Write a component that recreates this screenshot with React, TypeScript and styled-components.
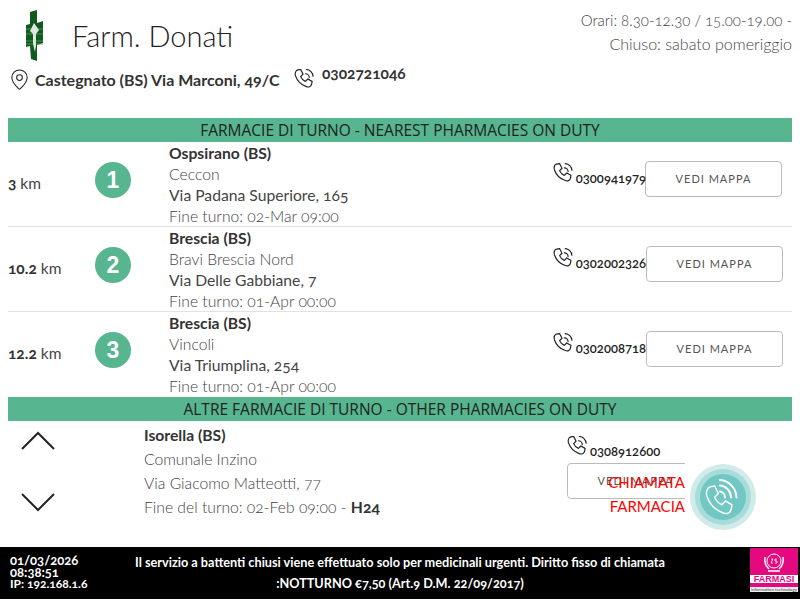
import React from 'react';
import styled, { createGlobalStyle } from 'styled-components';
import { MapPin } from 'lucide-react';

const GlobalStyle = createGlobalStyle`
  html, body {
    margin: 0;
    padding: 0;
    background: #fff;
    font-family: 'Lato', 'Open Sans', sans-serif;
    font-variant-numeric: oldstyle-nums;
    color: #333;
  }
`;

interface IPharmacy {
  city: string;
  name: string;
  address: string;
  until: string;
  km: string;
  phone: string;
  shift?: boolean;
}

const PHARMACIES: IPharmacy[] = [
  { city: 'Ospsirano (BS)', name: 'Ceccon', address: 'Via Padana Superiore, 165', until: 'Fine turno: 02-Mar 09:00', km: '3', phone: '0300941979', shift: true },
  { city: 'Brescia (BS)', name: 'Bravi Brescia Nord', address: 'Via Delle Gabbiane, 7', until: 'Fine turno: 01-Apr 00:00', km: '10.2', phone: '0302002326' },
  { city: 'Brescia (BS)', name: 'Vincoli', address: 'Via Triumplina, 254', until: 'Fine turno: 01-Apr 00:00', km: '12.2', phone: '0302008718' },
];

const HANDSET = 'M6 3 L9 2.5 L11.5 7.5 L9 10 C10 12.5 11.5 14 14 15 L16.5 12.5 L21 15 L20.5 18 C20 20.5 17.5 21.5 15 20.5 C9 18.5 5.5 15 3.5 9 C2.8 6 4 3.5 6 3 Z';

const PhoneIcon: React.FC = () => (
  <svg width="20" height="20" viewBox="2 2 21 21" fill="none" stroke="#222" strokeWidth="1.25" strokeLinecap="round">
    <path d={HANDSET} />
    <path d="M14 7 a4 4 0 0 1 4 4" />
    <path d="M15 2.5 a7.5 7.5 0 0 1 7 7" />
  </svg>
);

const CallIcon: React.FC = () => (
  <svg width="36" height="36" viewBox="0 0 36 36" fill="none" stroke="#fff" strokeLinecap="round">
    <g transform="translate(-3.3,3.25) scale(1.44,1.5)" strokeWidth="1">
      <path d={HANDSET} />
    </g>
    <g strokeWidth="2">
      <path d="M15 12.5 a6 6 0 0 1 5 6" />
      <path d="M15 6.5 a12 12 0 0 1 11 12" />
      <path d="M15 1 a18 18 0 0 1 16.5 17.5" />
    </g>
  </svg>
);

const CrossLogo: React.FC = () => (
  <svg width="17" height="51" viewBox="0 0 17 51">
    <path d="M4 2 L11 0 L11 13 L17 11 L17 33 L11 35 L11 51 L5 49 L4 36 L0 37 L0 15 L4 14 Z" fill="#0f5a1c" />
    <path d="M0 19 H17 M0 24 H17 M0 31 H17 M0 34 H17" stroke="#5a9a62" strokeWidth="0.8" />
    <path d="M8 13 L13 20 L10 24 L10 36 L9 42 L7 34 L7 24 L4 21 Z" fill="#dfe6df" />
  </svg>
);

const Farmasi: React.FC = () => (
  <FarmasiBox>
    <svg width="24" height="27" viewBox="0 0 24 27" fill="none" stroke="#fff">
      <circle cx="12" cy="13" r="7" strokeWidth="1" />
      <path d="M3 9 Q2 17 7 21 M21 9 Q22 17 17 21 M6 23 H18" strokeWidth="1.5" />
      <path d="M9 11 H11 L9 15 H11 M15 11 H13 V13 H15 V15 H13" strokeWidth="0.8" />
    </svg>
    <FarmasiName>FARMASI</FarmasiName>
    <FarmasiGap />
    <FarmasiTag>information technology</FarmasiTag>
  </FarmasiBox>
);

const App: React.FC = () => (
  <Page>
    <GlobalStyle />
    <Header>
      <HeaderLeft>
        <Brand>
          <CrossLogo />
          <Title>Farm. Donati</Title>
        </Brand>
        <ContactRow>
          <Pin>
            <MapPin size={23} strokeWidth={1.1} color="#222" />
          </Pin>
          <Address>Castegnato (BS) Via Marconi, 49/C</Address>
          <PhoneIcon />
          <HeaderPhone>0302721046</HeaderPhone>
        </ContactRow>
      </HeaderLeft>
      <Hours>
        <div>Orari: 8.30-12.30 / 15.00-19.00 -</div>
        <Closed>Chiuso: sabato pomeriggio</Closed>
      </Hours>
    </Header>

    <SectionBar>FARMACIE DI TURNO - NEAREST PHARMACIES ON DUTY</SectionBar>
    {PHARMACIES.map((p, i) => (
      <Row key={p.phone} last={i === PHARMACIES.length - 1}>
        <Km>
          <b>{p.km}</b> km
        </Km>
        <BadgeCell>
          <Badge>{i + 1}</Badge>
        </BadgeCell>
        <Info>
          <City>{p.city}</City>
          <Muted>{p.name}</Muted>
          <Street>{p.address}</Street>
          <Muted>{p.until}</Muted>
        </Info>
        <PhoneCell>
          <PhoneIcon />
          <PhoneNumber>{p.phone}</PhoneNumber>
        </PhoneCell>
        <MapButton shift={p.shift}>VEDI MAPPA</MapButton>
      </Row>
    ))}

    <SectionBar>ALTRE FARMACIE DI TURNO - OTHER PHARMACIES ON DUTY</SectionBar>
    <Other>
      <Arrows>
        <svg width="34" height="20" viewBox="0 0 34 20" fill="none" stroke="#222" strokeWidth="2">
          <polyline points="1,18 17,2 33,18" />
        </svg>
        <svg width="34" height="20" viewBox="0 0 34 20" fill="none" stroke="#222" strokeWidth="2">
          <polyline points="1,2 17,18 33,2" />
        </svg>
      </Arrows>
      <OtherInfo>
        <City>Isorella (BS)</City>
        <Muted>Comunale Inzino</Muted>
        <Muted>Via Giacomo Matteotti, 77</Muted>
        <Muted>
          Fine del turno: 02-Feb 09:00 - <Strong>H24</Strong>
        </Muted>
      </OtherInfo>
      <OtherActions>
        <OtherPhone>
          <PhoneIcon />
          <PhoneNumber>0308912600</PhoneNumber>
        </OtherPhone>
        <OtherButton>VEDI MAPPA</OtherButton>
      </OtherActions>
      <CallWidget>
        <CallLabel>
          CHIAMATA
          <br />
          FARMACIA
        </CallLabel>
        <Halo>
          <HaloMid>
            <HaloInner>
              <CallIcon />
            </HaloInner>
          </HaloMid>
        </Halo>
      </CallWidget>
    </Other>

    <Footer>
      <Stamp>
        <div>01/03/2026</div>
        <div>08:38:51</div>
        <StampIp>IP: 192.168.1.6</StampIp>
      </Stamp>
      <Notice>
        Il servizio a battenti chiusi viene effettuato solo per medicinali urgenti. Diritto fisso di chiamata
        <br />
        :NOTTURNO €7,50 (Art.9 D.M. 22/09/2017)
      </Notice>
      <Farmasi />
    </Footer>
  </Page>
);

export default App;

const Page = styled.div`
  width: 800px;
  height: 600px;
  overflow: hidden;
  display: flex;
  flex-direction: column;
`;

const Header = styled.header`
  height: 118px;
  display: flex;
  justify-content: space-between;
  padding: 9px 8px 0 11px;
  box-sizing: border-box;
`;

const HeaderLeft = styled.div`
  display: flex;
  flex-direction: column;
`;

const Brand = styled.div`
  display: flex;
  align-items: center;
  gap: 29px;
  padding-left: 15px;
  height: 52px;
`;

const Title = styled.div`
  font-size: 29px;
  font-weight: 300;
  color: #222;
`;

const ContactRow = styled.div`
  display: flex;
  align-items: center;
  margin-top: 8px;
  height: 20px;
`;

const Pin = styled.div`
  display: flex;
  margin-left: -3px;
`;

const Address = styled.div`
  font-size: 16px;
  font-weight: 700;
  margin-left: 4px;
  width: 259px;
  white-space: nowrap;
`;

const HeaderPhone = styled.div`
  font-size: 15.5px;
  font-weight: 700;
  margin-left: 8px;
  position: relative;
  top: -6px;
`;

const Hours = styled.div`
  font-size: 15px;
  font-weight: 300;
  line-height: 24px;
  text-align: right;
  color: #444;
  margin-top: -1px;
`;

const Closed = styled.div`
  font-size: 16px;
`;

const SectionBar = styled.div`
  flex: none;
  height: 24px;
  margin: 0 8px;
  background: #57b58f;
  color: #222;
  font-family: 'Open Sans', sans-serif;
  font-size: 15.5px;
  line-height: 24px;
  text-align: center;
`;

const Row = styled.div<{ last?: boolean }>`
  flex: none;
  height: 85px;
  margin: 0 8px;
  box-sizing: border-box;
  display: grid;
  grid-template-columns: 70px 91px 385px 92px 137px;
  align-items: start;
  border-bottom: ${({ last }) => (last ? 'none' : '1px solid #e2e2e2')};
`;

const Km = styled.div`
  font-size: 15.5px;
  color: #444;
  margin-top: 32px;

  b {
    color: #333;
  }
`;

const BadgeCell = styled.div`
  display: flex;
  justify-content: flex-start;
  padding: 20px 0 0 17px;
`;

const Badge = styled.div`
  width: 36px;
  height: 36px;
  border-radius: 50%;
  background: #57b58f;
  color: #fff;
  font-family: 'Liberation Sans', sans-serif;
  font-size: 23px;
  font-weight: 700;
  line-height: 36px;
  text-align: center;
`;

const Info = styled.div`
  font-size: 15.7px;
  line-height: 21px;
  padding-top: 1px;
  color: #444;
  white-space: nowrap;
`;

const City = styled.div`
  font-weight: 700;
  color: #333;
`;

const Muted = styled.div`
  font-weight: 300;
  color: #444;
`;

const Street = styled.div`
  color: #444;
`;

const Strong = styled.span`
  font-weight: 700;
  color: #333;
`;

const PhoneCell = styled.div`
  display: flex;
  align-items: flex-end;
  gap: 3px;
  padding-top: 21px;
  margin-left: -1px;
`;

const PhoneNumber = styled.span`
  font-size: 13px;
  font-weight: 600;
  color: #222;
  position: relative;
  top: 3px;
`;

const MapButton = styled.div<{ shift?: boolean }>`
  width: 137px;
  height: 36px;
  box-sizing: border-box;
  margin: 19px 0 0 ${({ shift }) => (shift ? '-1px' : '0')};
  border: 1px solid #bbb;
  border-radius: 4px;
  background: #fff;
  color: #555;
  font-size: 11px;
  letter-spacing: 1px;
  line-height: 34px;
  text-align: center;
`;

const Other = styled.div`
  flex: none;
  height: 126px;
  position: relative;
  display: flex;
`;

const Arrows = styled.div`
  width: 144px;
  padding: 10px 0 0 21px;
  box-sizing: border-box;
  display: flex;
  flex-direction: column;
  gap: 41px;
`;

const OtherInfo = styled.div`
  width: 423px;
  font-size: 15.7px;
  line-height: 24px;
  padding-top: 2px;
  white-space: nowrap;
`;

const OtherActions = styled.div`
  width: 118px;
  overflow: hidden;
  padding-top: 15px;
`;

const OtherPhone = styled.div`
  display: flex;
  align-items: flex-end;
  gap: 3px;
  height: 20px;
  margin-bottom: 7px;
`;

const OtherButton = styled(MapButton)`
  margin: 0;
`;

const CallWidget = styled.div`
  position: absolute;
  left: 600px;
  top: 43px;
  display: flex;
  align-items: center;
`;

const CallLabel = styled.div`
  width: 85px;
  color: #f00;
  font-size: 15px;
  line-height: 24px;
  text-align: right;
  margin-bottom: 6px;
`;

const Halo = styled.div`
  width: 66px;
  height: 66px;
  margin-left: 5px;
  border-radius: 50%;
  background: #d0ebe9;
  display: flex;
  align-items: center;
  justify-content: center;
`;

const HaloMid = styled.div`
  width: 56px;
  height: 56px;
  border-radius: 50%;
  background: #a8dcd8;
  display: flex;
  align-items: center;
  justify-content: center;
`;

const HaloInner = styled.div`
  width: 46px;
  height: 46px;
  border-radius: 50%;
  background: #70c7c4;
  display: flex;
  align-items: center;
  justify-content: center;
`;

const Footer = styled.footer`
  flex: none;
  height: 52px;
  background: #000;
  color: #fff;
  display: flex;
  align-items: center;
`;

const Stamp = styled.div`
  width: 110px;
  padding-left: 10px;
  box-sizing: border-box;
  font-size: 13px;
  font-weight: 700;
  line-height: 12px;
  margin-top: -2px;
`;

const StampIp = styled.div`
  font-size: 12px;
`;

const Notice = styled.div`
  width: 580px;
  font-size: 12.7px;
  font-weight: 700;
  line-height: 21px;
  text-align: center;
`;

const FarmasiBox = styled.div`
  width: 48px;
  height: 44px;
  margin: 0 0 7px 60px;
  background: #e5097f;
  display: flex;
  flex-direction: column;
  align-items: center;
  overflow: hidden;
`;

const FarmasiName = styled.div`
  flex: none;
  width: 100%;
  background: #fff;
  color: #e5097f;
  font-family: 'Liberation Sans', sans-serif;
  font-size: 9px;
  font-weight: 700;
  line-height: 8px;
  text-align: center;
`;

const FarmasiGap = styled.div`
  flex: 1;
`;

const FarmasiTag = styled.div`
  flex: none;
  width: 100%;
  background: #eee;
  color: #444;
  font-size: 4.5px;
  line-height: 5px;
  text-align: center;
  white-space: nowrap;
`;
